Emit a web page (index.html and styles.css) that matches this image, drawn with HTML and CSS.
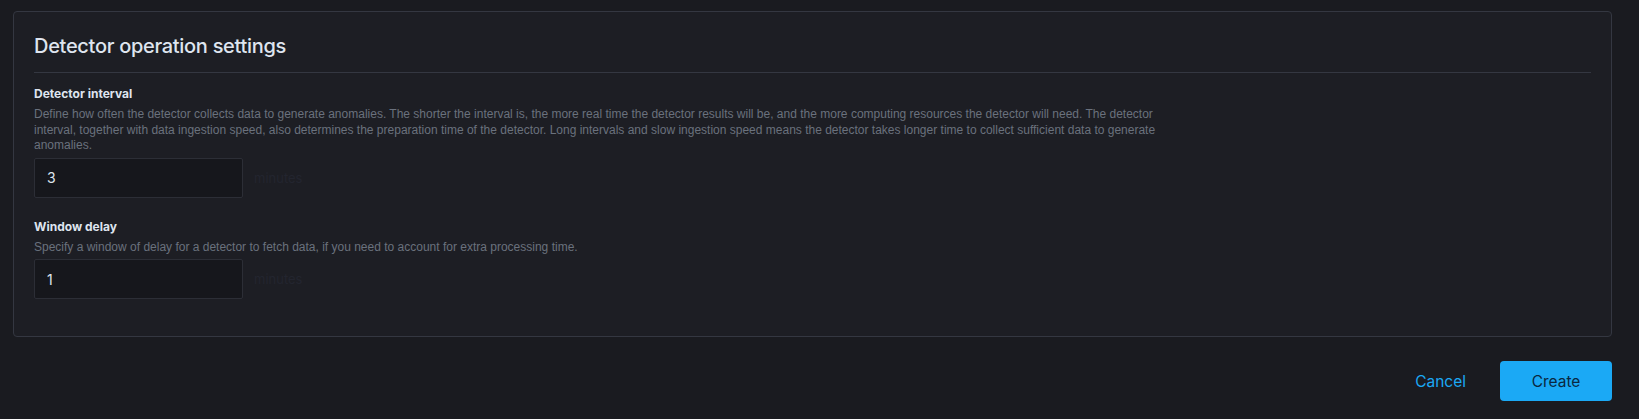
FILE: index.html
```html
<!DOCTYPE html>
<html>
<head>
<meta charset="utf-8">
<link rel="stylesheet" href="styles.css">
</head>
<body>
<div class="page">
  <section class="panel">
    <h2 class="title">Detector operation settings</h2>
    <hr class="rule">
    <div class="row">
      <div class="label">Detector interval</div>
      <div class="help">Define how often the detector collects data to generate anomalies. The shorter the interval is, the more real time the detector results will be, and the more computing resources the detector will need. The detector interval, together with data ingestion speed, also determines the preparation time of the detector. Long intervals and slow ingestion speed means the detector takes longer time to collect sufficient data to generate anomalies.</div>
      <div class="field">
        <div class="input">3</div>
        <span class="unit">minutes</span>
      </div>
    </div>
    <div class="row row-second">
      <div class="label">Window delay</div>
      <div class="help">Specify a window of delay for a detector to fetch data, if you need to account for extra processing time.</div>
      <div class="field">
        <div class="input">1</div>
        <span class="unit">minutes</span>
      </div>
    </div>
  </section>
  <div class="footer">
    <button class="btn-link">Cancel</button>
    <button class="btn-primary">Create</button>
  </div>
</div>
</body>
</html>
```
FILE: styles.css
```css
html, body {
  margin: 0;
  padding: 0;
  background: #1a1b20;
}
body {
  font-family: Inter, "Liberation Sans", sans-serif;
  color: #dfe5ef;
  width: 1639px;
  height: 419px;
  overflow: hidden;
}
.page {
  padding: 11px 27px 0 13px;
}
.panel {
  background: #1d1e24;
  border: 1px solid #343741;
  border-radius: 4px;
  padding: 22px 20px 37px 20px;
}
.title {
  margin: 0;
  font-size: 20px;
  line-height: 24px;
  font-weight: 500;
  letter-spacing: -0.3px;
  color: #dfe5ef;
}
.rule {
  border: 0;
  border-top: 1px solid #343741;
  margin: 14px 0 0 0;
  height: 0;
}
.row {
  margin-top: 13px;
}
.row-second {
  margin-top: 21px;
}
.label {
  font-size: 12px;
  line-height: 16px;
  font-weight: 700;
  color: #dfe5ef;
}
.help {
  margin-top: 5px;
  font-family: "Liberation Sans", Arial, sans-serif;
  font-size: 12px;
  line-height: 15.6px;
  color: #6a717d;
  max-width: 1130px;
}
.field {
  margin-top: 4px;
  display: flex;
  align-items: center;
  gap: 11px;
}
.input {
  box-sizing: border-box;
  width: 209px;
  height: 40px;
  background: #16171c;
  border: 1px solid #2c2e36;
  border-radius: 2px;
  padding: 0 12px;
  display: flex;
  align-items: center;
  font-size: 14px;
  color: #dfe5ef;
}
.unit {
  font-size: 13px;
  color: #23252f;
}
.footer {
  display: flex;
  justify-content: flex-end;
  align-items: center;
  margin-top: 24px;
  gap: 22px;
}
.btn-link {
  background: none;
  border: 0;
  font-family: Inter, "Liberation Sans", sans-serif;
  font-size: 15.5px;
  color: #1ba9f5;
  padding: 0 12px;
  height: 40px;
  cursor: pointer;
}
.btn-primary {
  width: 112px;
  height: 40px;
  background: #1ba9f5;
  border: 0;
  border-radius: 4px;
  font-family: Inter, "Liberation Sans", sans-serif;
  font-size: 15.5px;
  color: #0a2740;
  cursor: pointer;
}
```
